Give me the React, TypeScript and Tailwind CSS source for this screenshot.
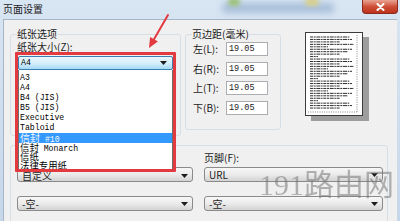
import React from "react";

// ── 共用字型 ─────────────────────────────────────────────
const cjk = "font-['Noto_Sans_CJK_SC','Liberation_Sans',sans-serif]";
const mono = "font-['Liberation_Mono','Noto_Sans_CJK_SC',monospace]";

const paperSizes: { cn?: string; en?: string; h: string; active?: boolean }[] = [
  { en: "A3", h: "h-[10px] leading-[10px]" },
  { en: "A4", h: "h-[10px] leading-[10px]" },
  { en: "B4 (JIS)", h: "h-[10px] leading-[10px]" },
  { en: "B5 (JIS)", h: "h-[10px] leading-[10px]" },
  { en: "Executive", h: "h-[10px] leading-[10px]" },
  { en: "Tabloid", h: "h-[10px] leading-[10px]" },
  { cn: "信封", en: " #10", h: "h-[10px] leading-[10px]", active: true },
  { cn: "信封", en: " Monarch", h: "h-[9px] leading-[9px]" },
  { cn: "信纸", h: "h-[9px] leading-[9px]" },
  { cn: "法律专用纸", h: "h-[9px] leading-[9px]" },
];

const previewLines = [40, 42, 30, 44, 18, 42, 38, 30, 8, 40, 42, 30, 44, 18, 42, 38, 30, 8, 40, 42, 30, 44, 18, 42, 38, 30, 8, 40, 42, 30];

function DownArrow() {
  return (
    <svg width="7" height="4" viewBox="0 0 7 4" className="shrink-0">
      <polygon points="0,0 7,0 3.5,4" fill="#1c1c1c" />
    </svg>
  );
}

function Combo({ value, className = "" }: { value: string; className?: string }) {
  return (
    <div
      className={`flex h-[15px] items-center justify-between rounded-[3px] border border-[#8a8a8a] bg-linear-to-b from-[#f7f7f7] via-[#ebebeb] to-[#d3d3d3] pl-[4px] pr-[4px] ${className}`}
    >
      <span className="text-[10px] leading-[10px] text-[#1e1e1e]">{value}</span>
      <DownArrow />
    </div>
  );
}

function MarginRow({ label, k }: { label: string; k: string }) {
  return (
    <div className="flex h-[14px] items-center">
      <span className="w-[33px] text-[10px] leading-[12px]">
        {label}({k}):
      </span>
      <div className="flex h-[14px] w-[42px] items-center border border-[#abadb3] bg-white pl-[2px]">
        <span className={`${mono} text-[8.5px] leading-[10px] text-[#1a1a1a]`}>19.05</span>
      </div>
    </div>
  );
}

function PagePreview() {
  return (
    <div className="ml-[24px] mt-[4px] h-[84px] w-[58px] border border-[#3c3c3c] bg-white shadow-[6px_5px_0_0_#9d9d9d]">
      <svg width="56" height="82" viewBox="0 0 56 82">
        {previewLines.map((w, i) => (
          <line
            key={i}
            x1="4"
            x2={4 + w}
            y1={4 + i * 2.45}
            y2={4 + i * 2.45}
            stroke="#2e2e2e"
            strokeWidth="1"
            strokeDasharray="3 0.7 2 0.7 4 0.7 1.5 0.7"
          />
        ))}
        <line x1="51" x2="51" y1="2" y2="79" stroke="#7a7a7a" strokeWidth="0.9" strokeDasharray="1 1.3" />
        <line x1="2" x2="51" y1="79" y2="79" stroke="#7a7a7a" strokeWidth="0.9" strokeDasharray="1 1.3" />
      </svg>
    </div>
  );
}

export default function App() {
  return (
    <div
      className={`relative h-[221px] w-[400px] overflow-hidden bg-linear-to-b from-[#d8e5f2] to-[#c6d7ea] ${cjk} text-[#1b1b1b]`}
    >
      {/* 標題列 */}
      <div className="relative flex h-[19px] items-start justify-between">
        <div className="absolute left-[222px] top-[3px] h-[10px] w-[112px] rounded-[4px] bg-[#a9c0da] blur-[3px]" />
        <div className="absolute left-[228px] top-[-2px] h-[8px] w-[12px] rounded-full bg-[#9cc27a] blur-[2px]" />
        <div className="absolute left-[305px] top-[-2px] h-[8px] w-[14px] rounded-full bg-[#d6cf8c] blur-[2px]" />
        <span className="relative ml-[3px] mt-[3px] text-[10px] leading-[12px]">页面设置</span>
        <div className="relative mr-[2px] flex h-[14px] w-[36px] items-center justify-center rounded-b-[4px] border border-t-0 border-[#8b2a1d] bg-linear-to-b from-[#e8a493] via-[#cf4f37] to-[#bd321b]">
          <svg width="9" height="8" viewBox="0 0 9 8">
            <path d="M1.5 1 L7.5 7 M7.5 1 L1.5 7" stroke="#fff" strokeWidth="2" strokeLinecap="round" />
          </svg>
        </div>
      </div>

      {/* 對話框內容 */}
      <div className="ml-[3px] h-[202px] w-[394px] overflow-hidden border-l border-t border-[#a6b6c8] bg-[#f0f0f0]">
        <div className="ml-[6px] mt-[8px] flex items-start">
          <fieldset className="h-[108px] w-[171px] rounded-[3px] border border-[#d5dfe5]">
            <legend className="ml-[6px] text-[10px] leading-[12px]">纸张选项</legend>
            <div className="pl-[6px] pt-[1px] text-[10px] leading-[12px]">纸张大小(Z):</div>
            <div className="ml-[7px] mt-[3px] flex h-[14px] w-[155px] items-center justify-between rounded-[2px] border border-[#3c7fb1] bg-linear-to-b from-[#eaf6fd] via-[#d6effc] to-[#a7d9f5] pl-[2px] pr-[5px]">
              <span className={`${mono} text-[8.2px] leading-[10px] text-black`}>A4</span>
              <DownArrow />
            </div>
          </fieldset>

          <fieldset className="ml-[4px] h-[102px] w-[96px] rounded-[3px] border border-[#d5dfe5]">
            <legend className="ml-[6px] text-[10px] leading-[12px]">页边距(毫米)</legend>
            <div className="flex flex-col gap-[5.5px] pl-[7px] pt-[2px]">
              <MarginRow label="左" k="L" />
              <MarginRow label="右" k="R" />
              <MarginRow label="上" k="T" />
              <MarginRow label="下" k="B" />
            </div>
          </fieldset>

          <PagePreview />
        </div>

        {/* 頁首頁尾群組（標題被清單遮住） */}
        <div className="ml-[6px] mt-[9px] h-[90px] w-[378px] rounded-[3px] border border-[#d5dfe5]">
          <div className="grid grid-cols-[176px_179px] gap-x-[11px] pl-[6px] pt-[6px]">
            <div className="h-[12px]" />
            <div className="text-[10px] leading-[12px]">页脚(F):</div>
            <Combo className="mt-[3px] pt-[3px]" value="自定义" />
            <Combo className="mt-[3px]" value="URL" />
            <Combo className="mt-[14px]" value="-空-" />
            <Combo className="mt-[14px]" value="-空-" />
          </div>
        </div>
      </div>

      {/* 展開的下拉清單 */}
      <div className={`absolute left-[18px] top-[70px] h-[100px] w-[155px] border-x border-b border-[#6e6e6e] bg-white pt-[3px] ${mono} text-[8.2px] text-black`}>
        {paperSizes.map((p, i) => (
          <div
            key={i}
            className={`${p.h} whitespace-pre pl-[1px] ${p.active ? "bg-[#3399ff] text-[#eef6ff]" : ""}`}
          >
            {p.cn && <span className={`${cjk} ${p.active ? "text-[10px]" : "text-[9.4px]"}`}>{p.cn}</span>}
            {p.en}
          </div>
        ))}
      </div>

      {/* 紅框與箭頭 */}
      <div className="absolute left-[15px] top-[52px] h-[120px] w-[161px] rounded-[1px] border-[3px] border-[#e23a3f]" />
      <svg className="absolute left-[140px] top-[10px]" width="35" height="42" viewBox="0 0 35 42">
        <line x1="28" y1="5" x2="14" y2="29.3" stroke="#e23a3f" strokeWidth="2" strokeLinecap="round" />
        <polygon points="9,38 17.9,31.55 10.1,27.05" fill="#e23a3f" />
      </svg>

      {/* 浮水印 */}
      <div className="absolute left-[259px] top-[167px] flex items-baseline text-[30px] leading-[30px] text-[#6e6e6e] opacity-50">
        <span className="font-['Liberation_Serif',serif]">191</span>
        <span>路由网</span>
      </div>
    </div>
  );
}
